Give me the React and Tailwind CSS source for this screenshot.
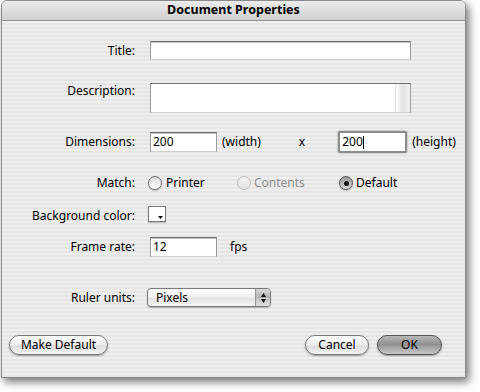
import React from "react";

const F = "font-['Noto_Sans','DejaVu_Sans',sans-serif]";

function Label({ children, className = "" }) {
  return (
    <div className={`w-[133px] shrink-0 text-right text-[12px] text-black ${className}`}>{children}</div>
  );
}

function TextField({ className = "", value = "" }) {
  return (
    <div
      className={`bg-white border border-[#9a9a9a] border-t-[#6e6e6e] border-b-[#cfcfcf] shadow-[inset_0_1px_0_#c4c4c4] flex items-center px-[2px] text-[12px] text-black ${className}`}
    >
      {value}
    </div>
  );
}

function Radio({ state }) {
  if (state === "on") {
    return (
      <div className="w-[14px] h-[14px] rounded-full border border-[#5a5a5a] bg-[linear-gradient(#9a9a9a,#d6d6d6)] flex items-center justify-center shadow-[0_1px_1px_rgba(0,0,0,0.25)]">
        <div className="w-[5px] h-[5px] rounded-full bg-[#111]" />
      </div>
    );
  }
  if (state === "disabled") {
    return (
      <div className="w-[14px] h-[14px] rounded-full border border-[#bdbdbd] bg-[linear-gradient(#f6f6f6,#e4e4e4)]" />
    );
  }
  return (
    <div className="w-[14px] h-[14px] rounded-full border border-[#707070] bg-[linear-gradient(#dcdcdc,#ffffff)] shadow-[0_1px_1px_rgba(0,0,0,0.25)]" />
  );
}

function PillButton({ children, className = "", dark = false }) {
  return (
    <div
      className={`h-[20px] rounded-full border flex items-center justify-center text-[12px] text-black shadow-[0_1px_2px_rgba(0,0,0,0.35)] ${
        dark
          ? "border-[#555] bg-[linear-gradient(#b8b8b8,#8e8e8e_50%,#9c9c9c_55%,#c6c6c6)]"
          : "border-[#7a7a7a] bg-[linear-gradient(#ffffff,#ececec_50%,#dcdcdc_55%,#f4f4f4)]"
      } ${className}`}
    >
      {children}
    </div>
  );
}

export default function App() {
  return (
    <div className={`w-[480px] h-[392px] bg-white overflow-hidden ${F}`}>
      <div className="ml-[1px] w-[465px] h-[378px] rounded-t-[6px] border border-[#8a8a8a] shadow-[3px_4px_8px_rgba(0,0,0,0.55)] flex flex-col overflow-hidden">
        <div className="h-[20px] shrink-0 bg-[linear-gradient(#ececec,#d0d0d0)] border-b border-[#8f8f8f] flex items-center justify-center text-[12.5px] font-bold text-black">
          Document Properties
        </div>
        <div className="flex-1 flex flex-col bg-[image:repeating-linear-gradient(180deg,#efefef_0px,#efefef_2px,#e5e5e5_2px,#e5e5e5_4px)]">
          {/* Title */}
          <div className="mt-[20px] flex items-center">
            <Label>Title:</Label>
            <TextField className="ml-[15px] w-[261px] h-[19px]" />
          </div>
          {/* Description */}
          <div className="mt-[23px] flex items-start">
            <Label className="-mt-[1px]">Description:</Label>
            <div className="ml-[15px] w-[261px] h-[30px] bg-white border border-[#9a9a9a] border-t-[#6e6e6e] border-b-[#cfcfcf] flex justify-end">
              <div className="w-[15px] h-full bg-[linear-gradient(90deg,#ffffff,#e2e2e2,#f4f4f4)] border-l border-[#e0e0e0]" />
            </div>
          </div>
          {/* Dimensions */}
          <div className="mt-[18px] flex items-center h-[22px]">
            <Label>Dimensions:</Label>
            <TextField className="ml-[15px] w-[67px] h-[20px]" value="200" />
            <span className="ml-[5px] text-[12px]">(width)</span>
            <span className="ml-[38px] text-[12px]">x</span>
            <div className="ml-[33px] w-[69px] h-[22px] rounded-[2px] border-[2px] border-[#8c8c8c] bg-white flex items-center px-[2px] text-[12px] shadow-[0_0_2px_rgba(0,0,0,0.4)]">
              200<span className="w-[1px] h-[13px] bg-black" />
            </div>
            <span className="ml-[5px] text-[12px]">(height)</span>
          </div>
          {/* Match */}
          <div className="mt-[23px] flex items-center h-[14px]">
            <Label>Match:</Label>
            <div className="ml-[13px] w-[89px] flex items-center">
              <Radio />
              <span className="ml-[4px] text-[12px]">Printer</span>
            </div>
            <div className="w-[102px] flex items-center">
              <Radio state="disabled" />
              <span className="ml-[3px] text-[12px] text-[#8e8e8e]">Contents</span>
            </div>
            <div className="flex items-center">
              <Radio state="on" />
              <span className="ml-[3px] text-[12px]">Default</span>
            </div>
          </div>
          {/* Background color */}
          <div className="mt-[16px] flex items-center h-[16px]">
            <Label className="mt-[3px]">Background color:</Label>
            <div className="ml-[13px] w-[18px] h-[16px] bg-white border border-[#7a7a7a] relative shadow-[0_1px_1px_rgba(0,0,0,0.2)]">
              <svg className="absolute right-[2px] bottom-[2px]" width="5" height="3" viewBox="0 0 5 3">
                <path d="M0 0H5L2.5 3Z" fill="#000" />
              </svg>
            </div>
          </div>
          {/* Frame rate */}
          <div className="mt-[15px] flex items-center h-[20px]">
            <Label>Frame rate:</Label>
            <TextField className="ml-[15px] w-[67px] h-[20px]" value="12" />
            <span className="ml-[13px] text-[12px]">fps</span>
          </div>
          {/* Ruler units */}
          <div className="mt-[31px] flex items-center h-[19px]">
            <Label>Ruler units:</Label>
            <div className="ml-[12px] w-[124px] h-[19px] rounded-[4px] border border-[#7a7a7a] bg-[linear-gradient(#ffffff,#eeeeee_50%,#e2e2e2_55%,#f6f6f6)] flex items-center shadow-[0_1px_1px_rgba(0,0,0,0.25)] overflow-hidden">
              <span className="flex-1 pl-[8px] text-[12px]">Pixels</span>
              <div className="w-[15px] h-full border-l border-[#9a9a9a] bg-[linear-gradient(#d8d8d8,#b4b4b4_50%,#c4c4c4_55%,#e0e0e0)] flex flex-col items-center justify-center gap-[2px]">
                <svg width="5" height="4" viewBox="0 0 5 4"><path d="M2.5 0L5 4H0Z" fill="#111" /></svg>
                <svg width="5" height="4" viewBox="0 0 5 4"><path d="M0 0H5L2.5 4Z" fill="#111" /></svg>
              </div>
            </div>
          </div>
          {/* Buttons */}
          <div className="mt-[28px] flex items-center">
            <PillButton className="ml-[7px] w-[99px]">Make Default</PillButton>
            <PillButton className="ml-[197px] w-[64px]">Cancel</PillButton>
            <PillButton dark className="ml-[8px] w-[65px]">OK</PillButton>
          </div>
        </div>
      </div>
    </div>
  );
}
